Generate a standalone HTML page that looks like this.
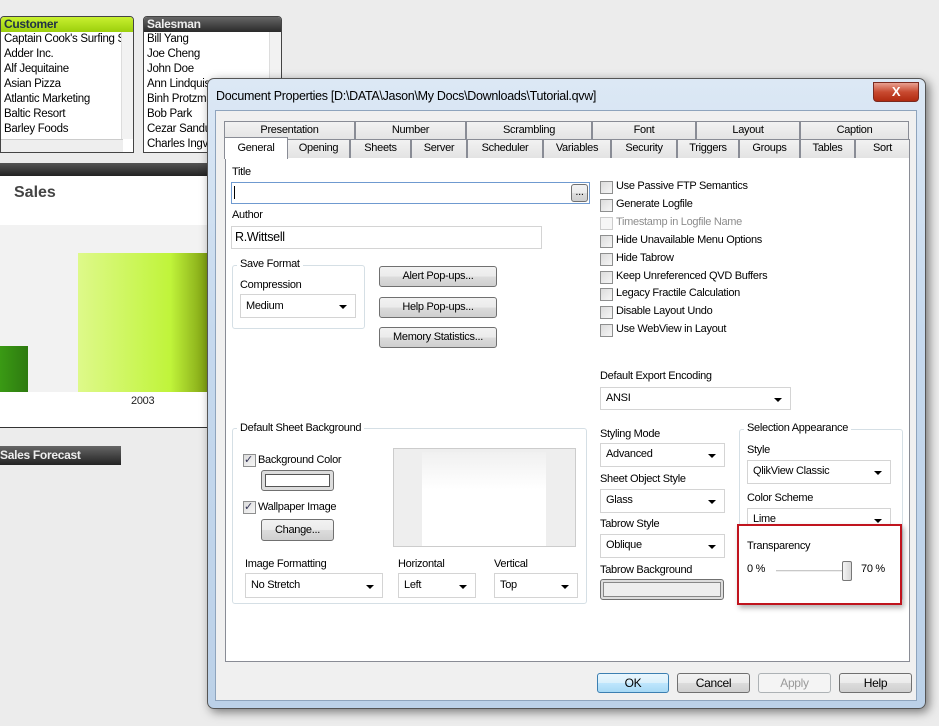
<!DOCTYPE html>
<html><head><meta charset="utf-8"><style>
*{margin:0;padding:0;box-sizing:border-box}
body{width:939px;height:726px;overflow:hidden;position:relative;background:#ececec;font-family:"Liberation Sans",sans-serif;font-size:11px;letter-spacing:-0.3px;color:#000}
.a{position:absolute;white-space:nowrap}
.lb{position:absolute;background:#fff;border:1px solid #444;overflow:hidden}
.lb div{height:15px;line-height:15px;padding-left:3px;font-size:11.5px;white-space:nowrap}
.sel{position:absolute;background:#fff;border:1px solid #d4d4d4;padding-left:5px;line-height:20px}
.sel:after{content:"";position:absolute;right:8px;top:50%;margin-top:-1px;border-left:4px solid transparent;border-right:4px solid transparent;border-top:4px solid #000}
.btn{position:absolute;border:1px solid #707070;border-radius:3px;background:linear-gradient(#f2f2f2,#ebebeb 50%,#dcdcdc 51%,#cfcfcf);text-align:center;line-height:18px}
.cb{position:absolute;width:13px;height:13px;border:1px solid #8e8f8f;background:linear-gradient(135deg,#dcdcdc,#f6f6f6)}
.gb{position:absolute;border:1px solid #d5dfe5;border-radius:3px}
.gl{position:absolute;background:#f0f0f0;padding:0 3px;white-space:nowrap}
.t1,.t2{position:absolute;border:1px solid #898c95;border-bottom:none;background:linear-gradient(#f2f2f2,#e3e3e3);text-align:center;line-height:17px}
</style></head><body>
<div class="lb" style="left:0;top:16px;width:134px;height:137px;border-radius:4px 4px 0 0">
<div style="height:15px;background:linear-gradient(#c8f030,#9ccf0c);font-weight:bold;font-size:12px;color:#234">Customer</div>
<div>Captain Cook's Surfing Sc</div><div>Adder Inc.</div><div>Alf Jequitaine</div><div>Asian Pizza</div><div>Atlantic Marketing</div><div>Baltic Resort</div><div>Barley Foods</div>
<div style="position:absolute;left:0;top:122px;width:122px;height:14px;background:#eee;border-top:1px solid #ccc"></div>
<div style="position:absolute;right:0;top:15px;width:12px;height:107px;background:#f2f2f2;border-left:1px solid #ddd"></div>
</div>
<div class="lb" style="left:143px;top:16px;width:139px;height:137px;border-radius:4px 4px 0 0">
<div style="height:15px;background:linear-gradient(#666,#2a2a2a);font-weight:bold;font-size:12px;color:#eee">Salesman</div>
<div>Bill Yang</div><div>Joe Cheng</div><div>John Doe</div><div>Ann Lindquist</div><div>Binh Protzman</div><div>Bob Park</div><div>Cezar Sandu</div><div>Charles Ingvar</div>
<div style="position:absolute;right:0;top:15px;width:12px;height:121px;background:#f2f2f2;border-left:1px solid #ddd"></div>
</div>
<div class="a" style="left:0;top:163px;width:210px;height:13px;background:linear-gradient(#555,#222)"></div>
<div class="a" style="left:0;top:176px;width:210px;height:252px;background:#fff;border-bottom:1px solid #333"></div>
<div class="a" style="left:14px;top:184px;font-size:16px;font-weight:bold;color:#444;letter-spacing:0">Sales</div>
<div class="a" style="left:0;top:225px;width:210px;height:167px;background:#f2f2f2"></div>
<div class="a" style="left:0;top:346px;width:28px;height:46px;background:linear-gradient(90deg,#3a9a14,#2e7a10)"></div>
<div class="a" style="left:78px;top:253px;width:132px;height:139px;background:linear-gradient(90deg,#def98a,#c0f43a 70%,#7a9a10)"></div>
<div class="a" style="left:131px;top:395px;font-size:11px;color:#222">2003</div>
<div class="a" style="left:0;top:446px;width:121px;height:19px;background:linear-gradient(#666,#222);color:#eee;font-weight:bold;font-size:12px;line-height:19px">Sales Forecast</div>
<div class="a" style="left:207px;top:78px;width:719px;height:631px;border:1px solid #555;border-radius:7px;background:linear-gradient(#dce8f5,#c6d9ee 40%,#bcd1e8);box-shadow:3px 3px 10px rgba(0,0,0,.5)"></div>
<div class="a" style="left:216px;top:89px;font-size:12.5px">Document Properties [D:\DATA\Jason\My Docs\Downloads\Tutorial.qvw]</div>
<div class="a" style="left:873px;top:82px;width:46px;height:20px;border:1px solid #7a2a20;border-radius:0 0 4px 4px;background:linear-gradient(#e8a090,#c84a30 50%,#b02a10);color:#fff;font-weight:bold;text-align:center;line-height:18px;font-size:13px">X</div>
<div class="a" style="left:215px;top:110px;width:702px;height:591px;background:#f0f0f0;border:1px solid #8ea4bd"></div>
<div class="t1" style="left:224px;top:121px;width:131px;height:19px">Presentation</div>
<div class="t1" style="left:355px;top:121px;width:111px;height:19px">Number</div>
<div class="t1" style="left:466px;top:121px;width:126px;height:19px">Scrambling</div>
<div class="t1" style="left:592px;top:121px;width:104px;height:19px">Font</div>
<div class="t1" style="left:696px;top:121px;width:104px;height:19px">Layout</div>
<div class="t1" style="left:800px;top:121px;width:109px;height:19px">Caption</div>
<div class="a" style="left:225px;top:157px;width:685px;height:505px;background:#fff;border:1px solid #898c95"></div>
<div class="t2" style="left:287px;top:139px;width:63px;height:19px">Opening</div>
<div class="t2" style="left:350px;top:139px;width:61px;height:19px">Sheets</div>
<div class="t2" style="left:411px;top:139px;width:56px;height:19px">Server</div>
<div class="t2" style="left:467px;top:139px;width:76px;height:19px">Scheduler</div>
<div class="t2" style="left:543px;top:139px;width:68px;height:19px">Variables</div>
<div class="t2" style="left:611px;top:139px;width:66px;height:19px">Security</div>
<div class="t2" style="left:677px;top:139px;width:62px;height:19px">Triggers</div>
<div class="t2" style="left:739px;top:139px;width:61px;height:19px">Groups</div>
<div class="t2" style="left:800px;top:139px;width:55px;height:19px">Tables</div>
<div class="t2" style="left:855px;top:139px;width:55px;height:19px">Sort</div>
<div class="a" style="left:224px;top:137px;width:64px;height:22px;background:#fff;border:1px solid #898c95;border-bottom:none;text-align:center;line-height:20px">General</div>
<div class="a" style="left:232px;top:166px">Title</div>
<div class="a" style="left:231px;top:182px;width:359px;height:22px;border:1px solid #6f9ad0;background:#fff"></div>
<div class="a" style="left:234px;top:186px;width:1px;height:13px;background:#000"></div>
<div class="btn" style="left:571px;top:184px;width:17px;height:18px;line-height:14px">...</div>
<div class="a" style="left:232px;top:209px">Author</div>
<div class="a" style="left:231px;top:226px;width:311px;height:23px;border:1px solid #d4d4d4;background:#fff;padding-left:3px;line-height:21px;font-size:12.5px">R.Wittsell</div>
<div class="gb" style="left:232px;top:265px;width:133px;height:64px"></div>
<div class="gl" style="left:237px;top:258px;background:#fff">Save Format</div>
<div class="a" style="left:240px;top:279px">Compression</div>
<div class="sel" style="left:240px;top:294px;width:116px;height:24px;line-height:22px">Medium</div>
<div class="btn" style="left:379px;top:266px;width:118px;height:21px">Alert Pop-ups...</div>
<div class="btn" style="left:379px;top:297px;width:118px;height:21px">Help Pop-ups...</div>
<div class="btn" style="left:379px;top:327px;width:118px;height:21px">Memory Statistics...</div>
<div class="cb" style="left:600px;top:181px"></div><div class="a" style="left:616px;top:180px">Use Passive FTP Semantics</div>
<div class="cb" style="left:600px;top:199px"></div><div class="a" style="left:616px;top:198px">Generate Logfile</div>
<div class="cb" style="left:600px;top:217px;border-color:#ccc;background:#f6f6f6"></div><div class="a" style="left:616px;top:216px;color:#8d8d8d">Timestamp in Logfile Name</div>
<div class="cb" style="left:600px;top:235px"></div><div class="a" style="left:616px;top:234px">Hide Unavailable Menu Options</div>
<div class="cb" style="left:600px;top:253px"></div><div class="a" style="left:616px;top:252px">Hide Tabrow</div>
<div class="cb" style="left:600px;top:271px"></div><div class="a" style="left:616px;top:270px">Keep Unreferenced QVD Buffers</div>
<div class="cb" style="left:600px;top:288px"></div><div class="a" style="left:616px;top:287px">Legacy Fractile Calculation</div>
<div class="cb" style="left:600px;top:306px"></div><div class="a" style="left:616px;top:305px">Disable Layout Undo</div>
<div class="cb" style="left:600px;top:324px"></div><div class="a" style="left:616px;top:323px">Use WebView in Layout</div>
<div class="a" style="left:600px;top:370px">Default Export Encoding</div>
<div class="sel" style="left:600px;top:387px;width:191px;height:23px">ANSI</div>
<div class="gb" style="left:232px;top:428px;width:355px;height:176px"></div>
<div class="gl" style="left:237px;top:422px;background:#fff">Default Sheet Background</div>
<div class="cb" style="left:243px;top:454px;font-size:11px;line-height:11px;color:#335">✓</div><div class="a" style="left:258px;top:454px">Background Color</div>
<div class="a" style="left:261px;top:470px;width:73px;height:21px;border:1px solid #707070;border-radius:3px;background:#ddd;padding:3px"><div style="background:#fff;border:1px solid #555;height:13px"></div></div>
<div class="cb" style="left:243px;top:501px;font-size:11px;line-height:11px;color:#335">✓</div><div class="a" style="left:258px;top:501px">Wallpaper Image</div>
<div class="btn" style="left:261px;top:519px;width:73px;height:22px;line-height:20px">Change...</div>
<div class="a" style="left:393px;top:448px;width:183px;height:99px;background:#eee;border:1px solid #ccc"></div>
<div class="a" style="left:422px;top:452px;width:124px;height:94px;background:linear-gradient(#f0f0f0,#fff 40%)"></div>
<div class="a" style="left:245px;top:558px">Image Formatting</div>
<div class="sel" style="left:245px;top:573px;width:138px;height:25px;line-height:23px">No Stretch</div>
<div class="a" style="left:398px;top:558px">Horizontal</div>
<div class="sel" style="left:398px;top:573px;width:78px;height:25px;line-height:23px">Left</div>
<div class="a" style="left:494px;top:558px">Vertical</div>
<div class="sel" style="left:494px;top:573px;width:84px;height:25px;line-height:23px">Top</div>
<div class="a" style="left:600px;top:428px">Styling Mode</div>
<div class="sel" style="left:600px;top:443px;width:125px;height:24px">Advanced</div>
<div class="a" style="left:600px;top:473px">Sheet Object Style</div>
<div class="sel" style="left:600px;top:489px;width:125px;height:24px">Glass</div>
<div class="a" style="left:600px;top:518px">Tabrow Style</div>
<div class="sel" style="left:600px;top:534px;width:125px;height:24px">Oblique</div>
<div class="a" style="left:600px;top:564px">Tabrow Background</div>
<div class="a" style="left:600px;top:579px;width:124px;height:21px;border:1px solid #707070;border-radius:3px;background:#ddd;padding:2px"><div style="background:#eee;border:1px solid #888;height:15px"></div></div>
<div class="gb" style="left:739px;top:429px;width:164px;height:172px"></div>
<div class="gl" style="left:744px;top:422px;background:#fff">Selection Appearance</div>
<div class="a" style="left:747px;top:444px">Style</div>
<div class="sel" style="left:747px;top:460px;width:144px;height:24px">QlikView Classic</div>
<div class="a" style="left:747px;top:492px">Color Scheme</div>
<div class="sel" style="left:747px;top:508px;width:144px;height:24px">Lime</div>
<div class="a" style="left:737px;top:524px;width:165px;height:81px;border:2px solid #c0141e;background:#fff;box-shadow:2px 3px 5px rgba(0,0,0,.3)"></div>
<div class="a" style="left:747px;top:540px">Transparency</div>
<div class="a" style="left:747px;top:563px">0 %</div>
<div class="a" style="left:776px;top:570px;width:70px;height:2px;background:#c8c8c8;border-bottom:1px solid #eee"></div>
<div class="a" style="left:842px;top:561px;width:10px;height:20px;border:1px solid #777;border-radius:2px;background:linear-gradient(90deg,#f4f4f4,#d8d8d8)"></div>
<div class="a" style="left:861px;top:563px">70 %</div>
<div class="btn" style="left:597px;top:673px;width:72px;height:20px;border-color:#3c7fb1;background:linear-gradient(#eaf6fd,#d9f0fc 50%,#bee6fd 51%,#a7d9f5);font-size:12px">OK</div>
<div class="btn" style="left:677px;top:673px;width:73px;height:20px;font-size:12px">Cancel</div>
<div class="btn" style="left:758px;top:673px;width:73px;height:20px;border-color:#adb2b5;background:#f4f4f4;color:#9a9a9a;font-size:12px">Apply</div>
<div class="btn" style="left:839px;top:673px;width:73px;height:20px;font-size:12px">Help</div>
</body></html>
